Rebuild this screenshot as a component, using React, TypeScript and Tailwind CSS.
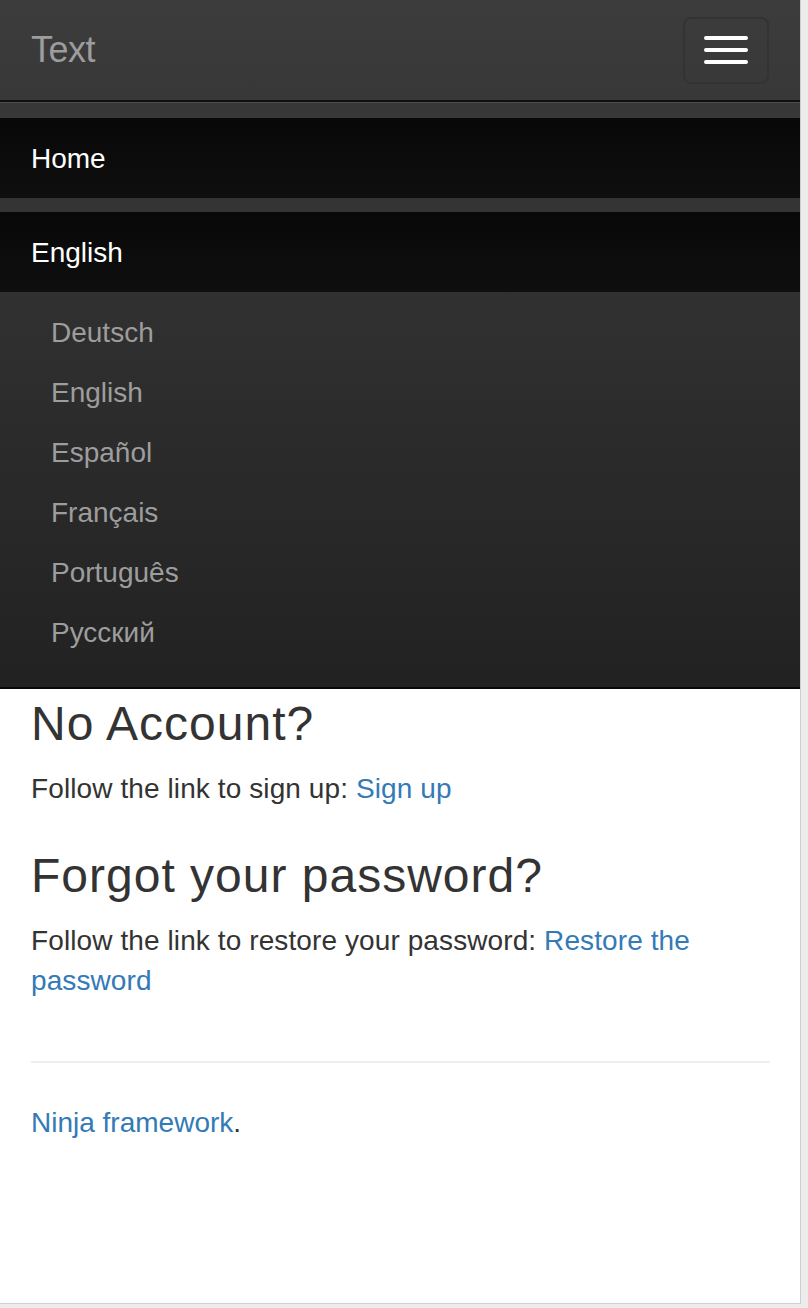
import React from "react";

const languages = ["Deutsch", "English", "Español", "Français", "Português", "Русский"];

const NavBar = () => {
  return (
    <div className="bg-gradient-to-b from-[#3c3c3c] to-[#222222] border-b-2 border-[#080808]">
      {/* header row */}
      <div className="h-[100px] flex items-center justify-between pl-[31px] pr-[31px]">
        <span className="text-[36px] leading-[40px] text-[#9d9d9d] tracking-[-0.5px]">Text</span>
        <button className="w-[86px] h-[67px] rounded-[8px] border-2 border-[#333333] flex flex-col items-center justify-center gap-[8px]">
          <span className="block w-[44px] h-[4px] rounded-[2px] bg-white" />
          <span className="block w-[44px] h-[4px] rounded-[2px] bg-white" />
          <span className="block w-[44px] h-[4px] rounded-[2px] bg-white" />
        </button>
      </div>
      {/* collapse */}
      <div className="border-t-2 border-[#101010] shadow-[inset_0_1px_0_rgba(255,255,255,0.1)] pt-[16px] pb-[15px]">
        <ul>
          <li className="h-[80px] flex items-center pl-[31px] pt-[2px] bg-gradient-to-b from-[#080808] to-[#0f0f0f] text-white text-[28px] leading-[40px]">
            Home
          </li>
        </ul>
        <ul className="mt-[14px]">
          <li className="h-[80px] flex items-center pl-[31px] pt-[2px] bg-gradient-to-b from-[#080808] to-[#0f0f0f] text-white text-[28px] leading-[40px]">
            English
          </li>
          <li>
            <ul className="pt-[11px] pb-[9px]">
              {languages.map((l) => (
                <li key={l} className="h-[60px] flex items-center pl-[51px] text-[#9d9d9d] text-[28px] leading-[40px]">
                  {l}
                </li>
              ))}
            </ul>
          </li>
        </ul>
      </div>
    </div>
  );
};

const App = () => {
  return (
    <div className="min-h-screen bg-[#ececec]" style={{ fontFamily: '"Liberation Sans", Arial, sans-serif' }}>
      <div className="w-[801px] h-[1304px] bg-white border-r border-b border-[#cfcfcf] overflow-hidden">
        <NavBar />
        <div className="px-[31px] text-[#333333] text-[28px] leading-[40px] pr-[30px]">
          <h3 className="mt-[9px] mb-[19px] text-[48px] leading-[52px] font-medium tracking-[1px]">No Account?</h3>
          <p className="tracking-[0.1px]">
            Follow the link to sign up: <a className="text-[#337ab7]">Sign up</a>
          </p>
          <h3 className="mt-[41px] mb-[19px] text-[48px] leading-[52px] font-medium tracking-[1px]">Forgot your password?</h3>
          <p className="tracking-[0.1px]">
            Follow the link to restore your password:{" "}
            <a className="text-[#337ab7]">Restore the password</a>
          </p>
          <hr className="mt-[60px] mb-[40px] border-t-2 border-[#eeeeee]" />
          <p>
            <a className="text-[#337ab7]">Ninja framework</a>.
          </p>
        </div>
      </div>
    </div>
  );
};

export default App;
